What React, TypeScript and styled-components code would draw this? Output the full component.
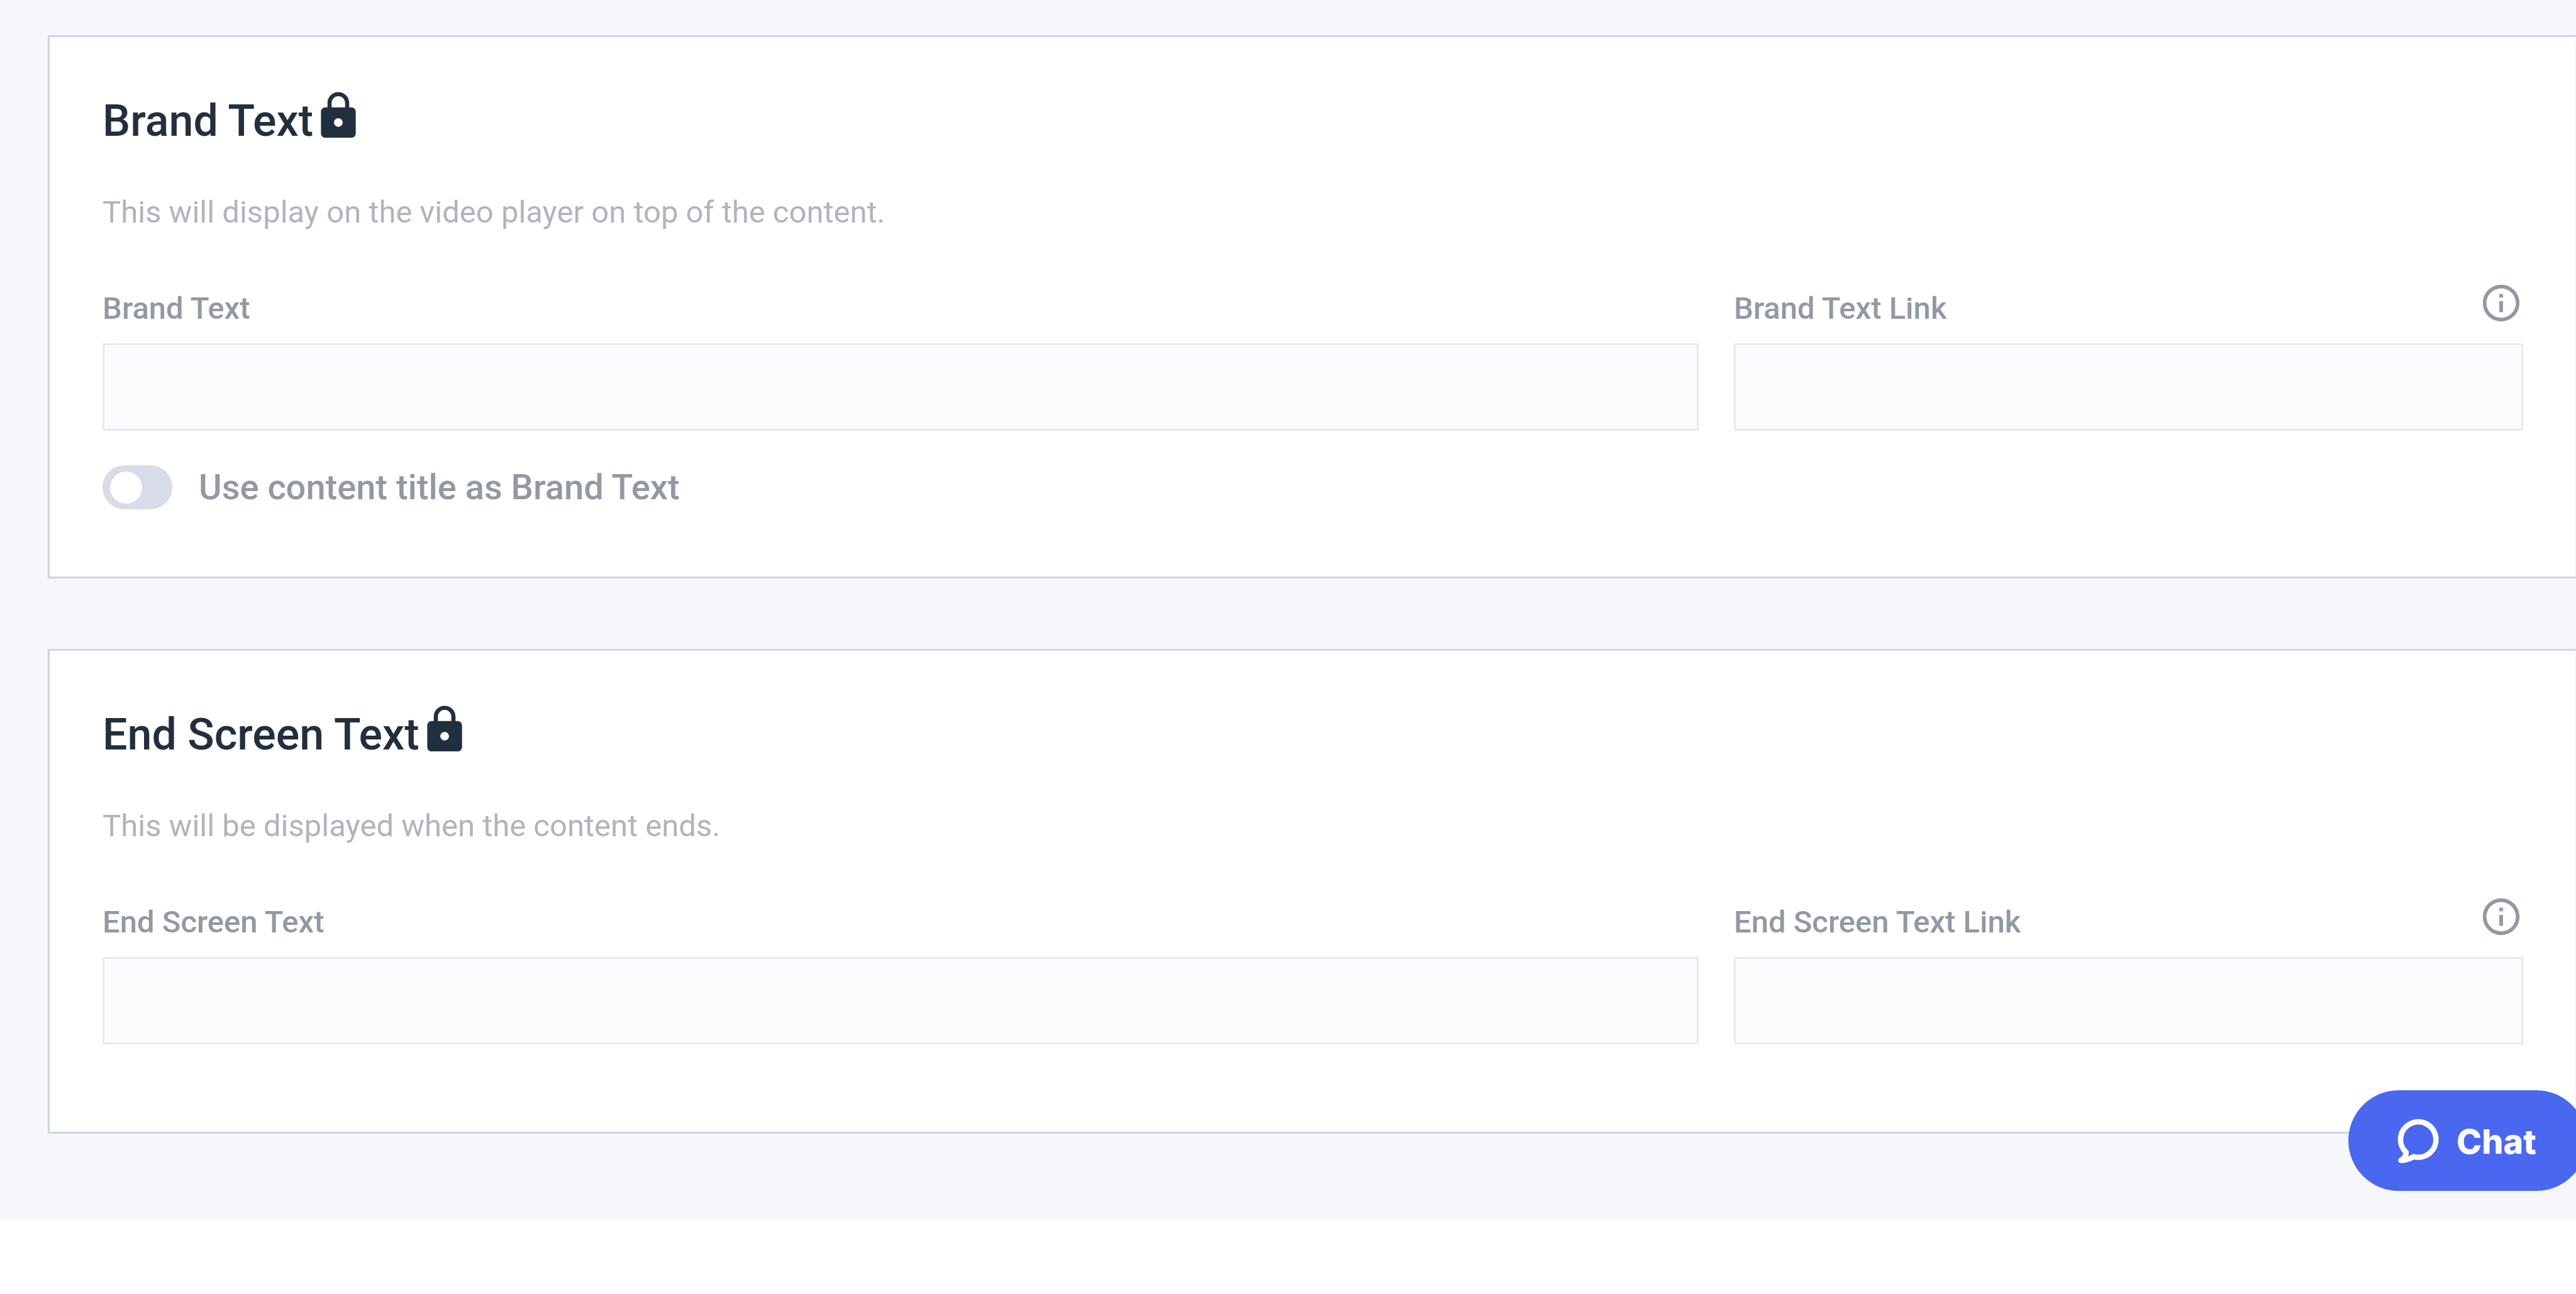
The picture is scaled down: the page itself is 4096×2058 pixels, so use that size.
import React, { useId } from "react";
import styled, { createGlobalStyle } from "styled-components";

const GlobalStyle = createGlobalStyle`
  *, *::before, *::after { box-sizing: border-box; }
  html, body { margin: 0; background: #ffffff; }
  body { font-family: Roboto, "Liberation Sans", sans-serif; overflow-x: hidden; }
`;

const Page = styled.main`
  display: flex;
  flex-direction: column;
  gap: 112px;
  padding: 56px 0 136px 76px;
  background: #f5f7fb;
`;

const Card = styled.section`
  padding: 84px 83px 107px 84px;
  background: #ffffff;
  border: 3px solid #cdd5e3;
  border-right: 1px solid #f0f2f7;
`;

const CardHeader = styled.header`
  display: flex;
  align-items: flex-end;
  gap: 2px;
  color: #222f3e;
`;

const CardTitle = styled.h2`
  margin: 0;
  font-size: 70px;
  line-height: 68px;
  font-weight: 500;
`;

const LockSvg = styled.svg`
  flex: none;
  width: 76px;
  height: 83px;
  fill: currentColor;
`;

const Description = styled.p`
  margin: 82px 0 79px;
  color: #b0b4bc;
  font-size: 49px;
  line-height: 60px;
`;

const Fields = styled.div`
  display: grid;
  grid-template-columns: 91fr 45fr;
  gap: 56px;
  margin-bottom: 32px;
`;

const Field = styled.div`
  display: flex;
  flex-direction: column;
  gap: 29px;
  min-width: 0;
`;

const LabelRow = styled.div`
  display: flex;
  align-items: flex-end;
  justify-content: space-between;
  height: 70px;
`;

const Label = styled.label`
  color: #9299a2;
  font-size: 49px;
  line-height: 52px;
  font-weight: 500;
`;

const TextInput = styled.input`
  width: 100%;
  height: 139px;
  padding: 0 40px;
  border: 3px solid #e5e9f1;
  border-radius: 0;
  background: #fafbfd;
  color: #222f3e;
  font: inherit;
  font-size: 49px;
`;

const InfoButton = styled.button`
  display: flex;
  padding: 0;
  border: 0;
  background: none;
  color: #9299a2;
  cursor: pointer;
`;

const InfoSvg = styled.svg`
  width: 70px;
  height: 70px;
  fill: currentColor;
`;

const ToggleRow = styled.div`
  display: flex;
  align-items: center;
  gap: 42px;
  padding-top: 23px;
`;

const Toggle = styled.input`
  appearance: none;
  display: flex;
  align-items: center;
  flex: none;
  width: 111px;
  height: 70px;
  margin: 0;
  padding: 0 12px;
  border-radius: 35px;
  background: #d8dce8;
  cursor: pointer;

  &::before {
    content: "";
    width: 51px;
    height: 51px;
    border-radius: 50%;
    background: #ffffff;
  }

  &:checked {
    justify-content: flex-end;
    background: #4a67f0;
  }
`;

const ToggleLabel = styled.label`
  color: #9299a2;
  font-size: 56px;
  line-height: 70px;
  font-weight: 500;
`;

const ChatButton = styled.button`
  position: fixed;
  right: -17px;
  bottom: 164px;
  display: flex;
  align-items: center;
  gap: 22px;
  min-width: 379px;
  height: 160px;
  padding: 4px 74px 0;
  border: 0;
  border-radius: 80px;
  background: #4a67f0;
  color: #ffffff;
  font-family: Inter, Roboto, sans-serif;
  font-size: 54px;
  line-height: 64px;
  font-weight: 800;
  cursor: pointer;
`;

const ChatSvg = styled.svg`
  flex: none;
  width: 76px;
  height: 76px;
  fill: none;
  stroke: currentColor;
  stroke-width: 8.6;
  stroke-linejoin: round;
`;

function LockIcon() {
  return (
    <LockSvg viewBox="1 0 22 24" aria-hidden="true">
      <path d="M18 8h-1V6c0-2.76-2.24-5-5-5S7 3.24 7 6v2H6c-1.1 0-2 .9-2 2v10c0 1.1.9 2 2 2h12c1.1 0 2-.9 2-2V10c0-1.1-.9-2-2-2zm-6 9c-1.1 0-2-.9-2-2s.9-2 2-2 2 .9 2 2-.9 2-2 2zm3.1-9H8.9V6c0-1.71 1.39-3.1 3.1-3.1s3.1 1.39 3.1 3.1v2z" />
    </LockSvg>
  );
}

function InfoIcon() {
  return (
    <InfoSvg viewBox="0 0 24 24" aria-hidden="true">
      <path d="M11 7h2v2h-2zm0 4h2v6h-2zm1-9C6.48 2 2 6.48 2 12s4.48 10 10 10 10-4.48 10-10S17.52 2 12 2zm0 18c-4.41 0-8-3.59-8-8s3.59-8 8-8 8 3.59 8 8-3.59 8-8 8z" />
    </InfoSvg>
  );
}

function ChatIcon() {
  return (
    <ChatSvg viewBox="0 2 76 76" aria-hidden="true">
      <path d="M18 57A28.2 28.2 0 1 1 30 63.6C24 67 18 70 9.5 69.5C14 67 17.5 62 18 57Z" />
    </ChatSvg>
  );
}

interface TextFieldProps {
  label: string;
  info?: boolean;
}

function TextField({ label, info = false }: TextFieldProps) {
  const id = useId();
  return (
    <Field>
      <LabelRow>
        <Label htmlFor={id}>{label}</Label>
        {info && (
          <InfoButton type="button" aria-label={`About ${label}`}>
            <InfoIcon />
          </InfoButton>
        )}
      </LabelRow>
      <TextInput id={id} type="text" />
    </Field>
  );
}

interface TextCardProps {
  title: string;
  description: string;
  children?: React.ReactNode;
}

function TextCard({ title, description, children }: TextCardProps) {
  return (
    <Card>
      <CardHeader>
        <CardTitle>{title}</CardTitle>
        <LockIcon />
      </CardHeader>
      <Description>{description}</Description>
      <Fields>
        <TextField label={title} />
        <TextField label={`${title} Link`} info />
      </Fields>
      {children}
    </Card>
  );
}

export default function App() {
  return (
    <>
      <GlobalStyle />
      <Page>
        <TextCard
          title="Brand Text"
          description="This will display on the video player on top of the content."
        >
          <ToggleRow>
            <Toggle id="use-title" type="checkbox" role="switch" />
            <ToggleLabel htmlFor="use-title">Use content title as Brand Text</ToggleLabel>
          </ToggleRow>
        </TextCard>
        <TextCard
          title="End Screen Text"
          description="This will be displayed when the content ends."
        />
      </Page>
      <ChatButton type="button">
        <ChatIcon />
        Chat
      </ChatButton>
    </>
  );
}
